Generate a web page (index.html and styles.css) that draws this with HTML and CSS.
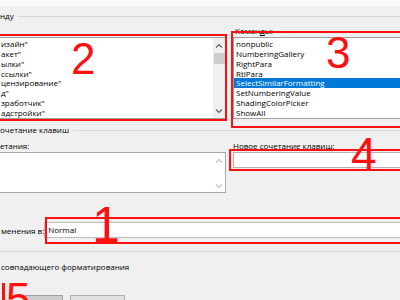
FILE: index.html
```html
<!DOCTYPE html>
<html lang="ru">
<head>
<meta charset="utf-8">
<link rel="stylesheet" href="styles.css">
</head>
<body>
<div class="dialog">
  <div class="strip"></div>
  <div class="grouphead g1"><span class="gtext">нду</span><i class="rule"></i></div>
  <div class="pair lists">
    <div class="col">
      <div class="listbox cats">
        <ul class="items">
          <li>изайн"</li>
          <li>акет"</li>
          <li>ылки"</li>
          <li>ссылки"</li>
          <li>цензирование"</li>
          <li>д"</li>
          <li>зработчик"</li>
          <li>адстройки"</li>
        </ul>
        <div class="vscroll">
          <svg class="arr" width="12" height="8" viewBox="0 0 12 8"><polyline points="3,5.5 6,2.5 9,5.5" fill="none" stroke="#606060" stroke-width="1.2"/></svg>
          <span class="thumb"></span>
          <span class="spacer"></span>
          <svg class="arr" width="12" height="8" viewBox="0 0 12 8"><polyline points="3,2.5 6,5.5 9,2.5" fill="none" stroke="#606060" stroke-width="1.2"/></svg>
        </div>
      </div>
    </div>
    <div class="col">
      <div class="label cmdlabel">Коман<u>д</u>ы:</div>
      <div class="listbox cmds">
        <ul class="items">
          <li>nonpublic</li>
          <li>NumberingGallery</li>
          <li>RightPara</li>
          <li>RtlPara</li>
          <li class="sel">SelectSimilarFormatting</li>
          <li>SetNumberingValue</li>
          <li>ShadingColorPicker</li>
          <li>ShowAll</li>
        </ul>
      </div>
    </div>
  </div>
  <div class="grouphead g2"><span class="gtext">очетание клавиш</span><i class="rule"></i></div>
  <div class="pair keys">
    <div class="col">
      <div class="label">етания:</div>
      <div class="listbox current">
        <div class="vscroll dis">
          <svg class="arr" width="12" height="8" viewBox="0 0 12 8"><polyline points="3,5.5 6,2.5 9,5.5" fill="none" stroke="#c2c2c2" stroke-width="1.2"/></svg>
          <span class="spacer"></span>
          <svg class="arr" width="12" height="8" viewBox="0 0 12 8"><polyline points="3,2.5 6,5.5 9,2.5" fill="none" stroke="#c2c2c2" stroke-width="1.2"/></svg>
        </div>
      </div>
    </div>
    <div class="col">
      <div class="label">Новое сочетание клавиш:</div>
      <div class="input newkey"></div>
    </div>
  </div>
  <div class="saverow">
    <span class="savelabel">менения в:</span>
    <div class="input saveinput">Normal</div>
  </div>
  <div class="sep"></div>
  <div class="desc">совпадающего форматирования</div>
  <div class="buttons">
    <span class="btn b1"></span>
    <span class="btn b2"></span>
  </div>

  <div class="mark box2"></div>
  <div class="mark box3"></div>
  <div class="mark box4"></div>
  <div class="mark box1"></div>
  <div class="mark bar5"></div>
  <span class="num n2">2</span>
  <span class="num n3">3</span>
  <span class="num n4">4</span>
  <span class="num n1">1</span>
  <span class="num n5">5</span>
</div>
</body>
</html>
```
FILE: styles.css
```css
html, body {
  margin: 0;
  padding: 0;
  background: #f0f0f0;
}
body {
  width: 400px;
  height: 300px;
  overflow: hidden;
  font-family: "Open Sans", "Noto Sans", sans-serif;
  font-size: 8px;
  color: #000;
}
.dialog {
  position: relative;
  width: 400px;
  height: 300px;
  overflow: hidden;
}
.strip {
  height: 6px;
  background: #fafafa;
}
.grouphead {
  display: flex;
  align-items: center;
  height: 20px;
}
.grouphead .gtext {
  line-height: 10px;
  white-space: nowrap;
}
.grouphead .rule {
  flex: 1;
  height: 0;
  border-top: 1px solid #d9d9d9;
  margin-left: 4px;
}
.g2 {
  height: 22px;
}
.pair {
  display: grid;
  grid-template-columns: 226px 190px;
  column-gap: 7px;
}
.col {
  display: flex;
  flex-direction: column;
}
.label {
  line-height: 9px;
  height: 9px;
  white-space: nowrap;
}
.label u {
  text-decoration: underline;
}
.cmdlabel {
  margin-bottom: 2px;
  padding-left: 2px;
}
.listbox {
  position: relative;
  background: #fff;
  border: 1px solid #a0a0a0;
  box-sizing: border-box;
  height: 82px;
  overflow: hidden;
  display: flex;
}
.cats {
  margin-top: 11px;
  margin-left: -2px;
  width: 228px;
}
.items {
  list-style: none;
  margin: 0;
  padding: 1px 0 0 0;
  flex: 1;
  min-width: 0;
}
.items li {
  height: 9.85px;
  line-height: 9.85px;
  white-space: nowrap;
  padding-left: 2px;
}
.cats .items li {
  padding-left: 2px;
}
.items li.sel {
  background: #0078d7;
  color: #fff;
}
.vscroll {
  width: 12px;
  flex: none;
  background: #f0f0f0;
  display: flex;
  flex-direction: column;
  align-items: center;
  padding: 4px 0 3px;
  box-sizing: border-box;
}
.vscroll .arr {
  flex: none;
  display: block;
}
.vscroll .thumb {
  display: block;
  width: 11px;
  height: 11px;
  margin-top: 3px;
  background: #cdcdcd;
}
.vscroll .spacer {
  flex: 1;
}
.dis {
  background: #fff;
}
.keys .label {
  margin-bottom: 1px;
  line-height: 10px;
  height: 10px;
}
.keys .col:last-child .label {
  padding-left: 0;
}
.current {
  height: 41px;
  margin-left: -2px;
  width: 228px;
  justify-content: flex-end;
  border-color: #a8a8a8;
}
.current .vscroll {
  padding: 4px 0 2px;
}
.input {
  background: #fff;
  border: 1px solid #b4b4b4;
  box-sizing: border-box;
  height: 16px;
}
.newkey {
  width: 190px;
}
.saverow {
  display: flex;
  align-items: center;
  margin-top: 29px;
  height: 16px;
}
.savelabel {
  width: 49px;
  padding-left: 1px;
  box-sizing: border-box;
  white-space: nowrap;
}
.saveinput {
  flex: none;
  width: 360px;
  line-height: 14px;
  padding-left: 3px;
  border-color: #bdbdbd;
}
.sep {
  margin-top: 13px;
  height: 0;
  border-top: 1px solid #d5d5d5;
}
.desc {
  margin-top: 9px;
  line-height: 12px;
  padding-left: 1px;
  white-space: nowrap;
}
.buttons {
  display: flex;
  margin-top: 22px;
  padding-left: 25px;
  gap: 7px;
}
.btn {
  display: block;
  height: 22px;
  box-sizing: border-box;
}
.b1 {
  width: 38px;
  background: #cccccc;
  border: 1px solid #a0a0a0;
}
.b2 {
  width: 55px;
  background: #e1e1e1;
  border: 1px solid #adadad;
}

/* red annotations laid over the dialog */
.mark {
  position: absolute;
  border: 2px solid #ff1010;
  box-sizing: border-box;
}
.box2 {
  left: -4px;
  top: 34px;
  width: 231px;
  height: 87px;
}
.box3 {
  left: 231px;
  top: 31px;
  width: 180px;
  height: 97px;
}
.box4 {
  left: 229px;
  top: 149px;
  width: 180px;
  height: 22px;
}
.box1 {
  left: 45px;
  top: 217px;
  width: 370px;
  height: 27px;
}
.bar5 {
  left: 2px;
  top: 283px;
  width: 3px;
  height: 20px;
  border: none;
  background: #ff1010;
}
.num {
  position: absolute;
  font-family: "Liberation Sans", Arial, sans-serif;
  color: #ff1010;
  line-height: 1;
  font-size: 44px;
}
.n2 {
  left: 71px;
  top: 37px;
}
.n3 {
  left: 326px;
  top: 31px;
}
.n4 {
  left: 351px;
  top: 131px;
  font-size: 46px;
}
.n1 {
  left: 92px;
  top: 200px;
  font-size: 50px;
}
.n5 {
  left: 6px;
  top: 277px;
}
```
